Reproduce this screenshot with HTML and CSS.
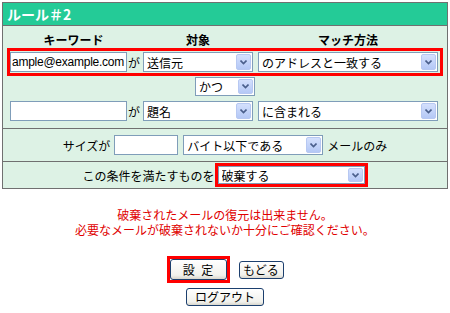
FILE: index.html
```html
<!DOCTYPE html>
<html lang="ja">
<head>
    <meta charset="UTF-8">
    <title>ルール＃2</title>
    <link rel="stylesheet" href="styles.css">
</head>
<body>
    <div class="panel">
        <div class="panel-title">ルール＃2</div>
        <div class="rules">
            <div class="rule-head">
                <span class="col-keyword">キーワード</span>
                <span class="col-target">対象</span>
                <span class="col-method">マッチ方法</span>
            </div>
            <div class="rule-row marked">
                <input class="keyword" type="text" value="ample@example.com">
                <span class="ga">が</span>
                <span class="combo target">
                    <select><option>送信元</option></select>
                    <span class="combo-arrow"><svg width="7" height="5" viewBox="0 0 7 5"><path d="M0.5 0.5 L3.5 3.5 L6.5 0.5" fill="none" stroke="#4a5f8c" stroke-width="1.6"/></svg></span>
                </span>
                <span class="combo method">
                    <select><option>のアドレスと一致する</option></select>
                    <span class="combo-arrow"><svg width="7" height="5" viewBox="0 0 7 5"><path d="M0.5 0.5 L3.5 3.5 L6.5 0.5" fill="none" stroke="#4a5f8c" stroke-width="1.6"/></svg></span>
                </span>
            </div>
            <div class="joiner">
                <span class="combo join">
                    <select><option>かつ</option></select>
                    <span class="combo-arrow"><svg width="7" height="5" viewBox="0 0 7 5"><path d="M0.5 0.5 L3.5 3.5 L6.5 0.5" fill="none" stroke="#4a5f8c" stroke-width="1.6"/></svg></span>
                </span>
            </div>
            <div class="rule-row">
                <input class="keyword" type="text" value="">
                <span class="ga">が</span>
                <span class="combo target">
                    <select><option>題名</option></select>
                    <span class="combo-arrow"><svg width="7" height="5" viewBox="0 0 7 5"><path d="M0.5 0.5 L3.5 3.5 L6.5 0.5" fill="none" stroke="#4a5f8c" stroke-width="1.6"/></svg></span>
                </span>
                <span class="combo method">
                    <select><option>に含まれる</option></select>
                    <span class="combo-arrow"><svg width="7" height="5" viewBox="0 0 7 5"><path d="M0.5 0.5 L3.5 3.5 L6.5 0.5" fill="none" stroke="#4a5f8c" stroke-width="1.6"/></svg></span>
                </span>
            </div>
        </div>
        <div class="size-row">
            <span>サイズが</span>
            <input class="size" type="text" value="">
            <span class="combo unit">
                <select><option>バイト以下である</option></select>
                <span class="combo-arrow"><svg width="7" height="5" viewBox="0 0 7 5"><path d="M0.5 0.5 L3.5 3.5 L6.5 0.5" fill="none" stroke="#4a5f8c" stroke-width="1.6"/></svg></span>
            </span>
            <span>メールのみ</span>
        </div>
        <div class="action-row">
            <span>この条件を満たすものを</span>
            <span class="marked">
                <span class="combo action">
                    <select><option>破棄する</option></select>
                    <span class="combo-arrow"><svg width="7" height="5" viewBox="0 0 7 5"><path d="M0.5 0.5 L3.5 3.5 L6.5 0.5" fill="none" stroke="#4a5f8c" stroke-width="1.6"/></svg></span>
                </span>
            </span>
        </div>
    </div>

    <p class="notice">破棄されたメールの復元は出来ません。<br>必要なメールが破棄されないか十分にご確認ください。</p>

    <div class="buttons">
        <div class="button-row">
            <span class="marked"><button class="btn btn-set">設 定</button></span>
            <button class="btn btn-back">もどる</button>
        </div>
        <div class="button-row">
            <button class="btn btn-logout">ログアウト</button>
        </div>
    </div>
</body>
</html>
```

FILE: styles.css
```css
body {
    margin: 0;
    padding: 2px 0 0 2px;
    background-color: #ffffff;
    font-family: "Noto Sans CJK JP", sans-serif;
    font-size: 12px;
    color: #000000;
    width: 446px;
}
.panel {
    width: 444px;
    border: 1px solid #707070;
    background-color: #ddf2e5;
}
.panel-title {
    height: 22px;
    line-height: 22px;
    padding-left: 4px;
    background-color: #24cb97;
    color: #ffffff;
    font-weight: bold;
    font-size: 14px;
    border-bottom: 1px solid #707070;
}
.rules {
    padding: 0 4px 3px 4px;
}
.rule-head {
    display: flex;
    height: 22px;
    align-items: flex-end;
    padding-left: 3px;
    font-weight: bold;
    line-height: 16px;
    padding-bottom: 0;
    box-sizing: border-box;
}
.col-keyword {
    width: 127px;
    text-align: center;
}
.col-target {
    width: 110px;
    margin-left: 6px;
    text-align: center;
}
.col-method {
    width: 180px;
    margin-left: 5px;
    text-align: center;
}
.rule-row {
    display: flex;
    align-items: center;
    border: 3px solid transparent;
    padding: 1px 0;
}
.marked {
    border: 3px solid #ff0000;
}
.rule-row.marked {
    border-color: #ff0000;
}
input {
    box-sizing: border-box;
    height: 20px;
    border: 1px solid #7f9db9;
    padding: 0 1px;
    font-family: "Noto Sans CJK JP", sans-serif;
    font-size: 12px;
    background: #ffffff;
    margin: 0;
}
.keyword {
    width: 117px;
    font-family: "Liberation Sans", sans-serif;
    letter-spacing: -0.25px;
}
.ga {
    width: 16px;
    padding-left: 1px;
    box-sizing: border-box;
}
.combo {
    position: relative;
    display: inline-block;
    height: 20px;
}
.combo select {
    appearance: none;
    -webkit-appearance: none;
    box-sizing: border-box;
    width: 100%;
    height: 100%;
    border: 1px solid #7f9db9;
    border-radius: 0;
    padding: 0 0 0 3px;
    margin: 0;
    background: #ffffff;
    font-family: "Noto Sans CJK JP", sans-serif;
    font-size: 12px;
    color: #000000;
}
.combo-arrow {
    position: absolute;
    top: 2px;
    right: 2px;
    bottom: 2px;
    width: 15px;
    box-sizing: border-box;
    border: 1px solid #b7c8f2;
    border-radius: 2px;
    background: linear-gradient(#d4e0fd, #b4c8f6);
    display: flex;
    align-items: center;
    justify-content: center;
}
.target {
    width: 110px;
}
.method {
    width: 180px;
    margin-left: 5px;
}
.joiner {
    display: flex;
    justify-content: center;
    height: 21px;
    padding-top: 1px;
    box-sizing: border-box;
}
.join {
    width: 60px;
    height: 19px;
}
.size-row {
    display: flex;
    align-items: center;
    justify-content: center;
    height: 32px;
    border-top: 1px solid #707070;
}
.size {
    width: 64px;
    margin-left: 4px;
}
.unit {
    width: 140px;
    margin: 0 4px 0 5px;
}
.action-row {
    display: flex;
    align-items: center;
    justify-content: center;
    height: 26px;
    border-top: 1px solid #707070;
}
.action-row .marked {
    display: inline-block;
    padding: 0;
    line-height: 0;
}
.action {
    width: 147px;
    height: 18px;
}
.notice {
    margin: 18px 0 0 0;
    text-align: center;
    color: #e00000;
    line-height: 15px;
    width: 446px;
}
.buttons {
    width: 446px;
    margin-top: 19px;
}
.button-row {
    display: flex;
    justify-content: center;
    align-items: center;
}
.button-row + .button-row {
    margin-top: 5px;
}
.button-row .marked {
    display: inline-block;
    line-height: 0;
}
.btn {
    box-sizing: border-box;
    height: 18px;
    border: 1px solid #1c3f6e;
    border-radius: 3px;
    background: linear-gradient(#ffffff, #f1f1ec 80%, #d8d6cd);
    font-family: "Noto Sans CJK JP", sans-serif;
    font-size: 12px;
    line-height: 14px;
    padding: 0;
    margin: 0;
    color: #000000;
}
.btn-set {
    width: 57px;
    height: 21px;
    word-spacing: 4px;
}
.btn-back {
    width: 45px;
    margin-left: 9px;
}
.btn-logout {
    width: 78px;
}
```
